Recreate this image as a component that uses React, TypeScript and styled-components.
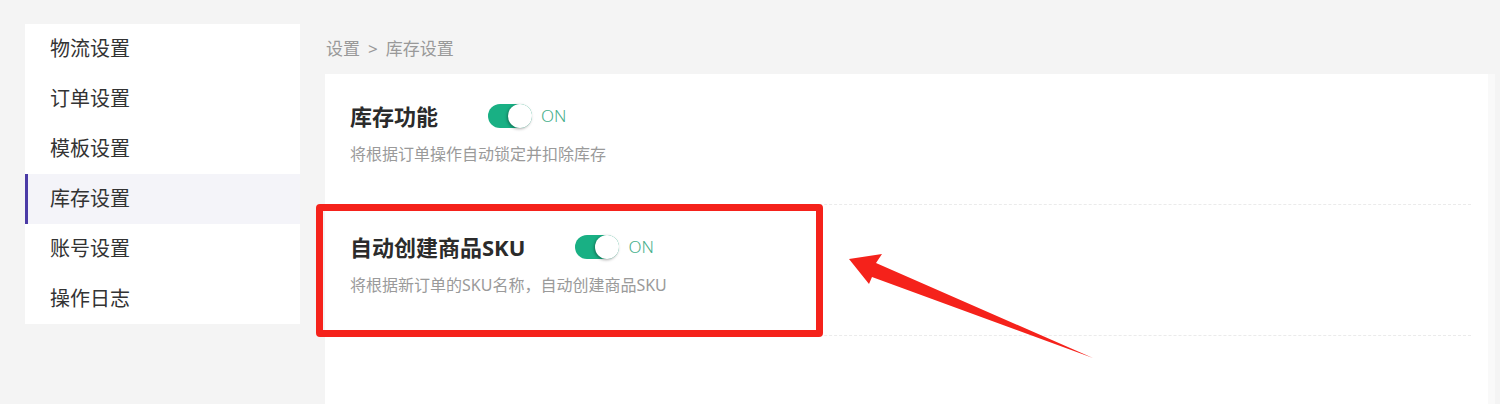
import React from 'react';
import styled, { createGlobalStyle } from 'styled-components';

const GlobalStyle = createGlobalStyle`
  html, body {
    margin: 0;
    padding: 0;
    background: #f4f4f4;
    font-family: "Noto Sans", "Noto Sans CJK SC", sans-serif;
  }
`;

const menuItems = ['物流设置', '订单设置', '模板设置', '库存设置', '账号设置', '操作日志'];

const settings = [
  { title: '库存功能', desc: '将根据订单操作自动锁定并扣除库存', on: true },
  { title: '自动创建商品SKU', desc: '将根据新订单的SKU名称，自动创建商品SKU', on: true },
];

const App = () => {
  return (
    <Page>
      <GlobalStyle />
      <Sidebar>
        {menuItems.map((item) => (
          <MenuItem key={item} active={item === '库存设置'}>
            {item}
          </MenuItem>
        ))}
      </Sidebar>
      <Main>
        <Breadcrumb>
          设置<Sep>&gt;</Sep>库存设置
        </Breadcrumb>
        <Panel>
          {settings.map((s) => (
            <Section key={s.title}>
              <TitleRow>
                <Title>{s.title}</Title>
                <Switch on={s.on}>
                  <Knob />
                </Switch>
                <SwitchLabel>{s.on ? 'ON' : 'OFF'}</SwitchLabel>
              </TitleRow>
              <Desc>{s.desc}</Desc>
            </Section>
          ))}
        </Panel>
      </Main>

      {/* annotation overlay */}
      <Highlight />
      <Arrow width="1500" height="404" viewBox="0 0 1500 404">
        <polygon
          points="849,259 882,254 876,263 1093,358 872,277 869,284"
          fill="#f5221b"
        />
      </Arrow>
    </Page>
  );
};

export default App;

const Page = styled.div`
  position: relative;
  display: flex;
  align-items: flex-start;
  gap: 25px;
  width: 1500px;
  height: 404px;
  box-sizing: border-box;
  padding: 24px 5px 0 25px;
  overflow: hidden;
`;

const Sidebar = styled.nav`
  width: 275px;
  flex-shrink: 0;
  background: #fff;
`;

const MenuItem = styled.div<{ active?: boolean }>`
  height: 50px;
  line-height: 50px;
  box-sizing: border-box;
  padding-left: ${(p) => (p.active ? '22px' : '25px')};
  border-left: ${(p) => (p.active ? '3px solid #4b3ba6' : 'none')};
  background: ${(p) => (p.active ? '#f4f4f9' : '#fff')};
  font-size: 20px;
  color: #333;
  cursor: pointer;
`;

const Main = styled.main`
  flex: 1;
  display: flex;
  flex-direction: column;
  height: 380px;
`;

const Breadcrumb = styled.div`
  height: 50px;
  line-height: 50px;
  padding-left: 1px;
  font-size: 17px;
  color: #999;
`;

const Sep = styled.span`
  margin: 0 8px;
`;

const Panel = styled.section`
  flex: 1;
  background: #fff;
  padding: 0 17px 0 25px;
  border-right: 7px solid #f9f9f9;
`;

const Section = styled.div`
  padding: 27px 0 40px;
  border-bottom: 1px dashed #ebebeb;
`;

const TitleRow = styled.div`
  display: flex;
  align-items: center;
  height: 30px;
`;

const Title = styled.h3`
  margin: 0 50px 0 0;
  font-size: 22px;
  font-weight: 700;
  line-height: 30px;
  color: #2b2b2b;
`;

const Switch = styled.span<{ on?: boolean }>`
  position: relative;
  width: 44px;
  height: 24px;
  border-radius: 12px;
  background: ${(p) => (p.on ? '#19b084' : '#ccc')};
`;

const Knob = styled.span`
  position: absolute;
  top: 0;
  right: 0;
  width: 24px;
  height: 24px;
  border-radius: 50%;
  background: #fff;
  box-shadow: -1px 1px 3px rgba(0, 0, 0, 0.35);
`;

const SwitchLabel = styled.span`
  margin-left: 9px;
  font-size: 17px;
  font-weight: 300;
  line-height: 30px;
  color: #45ae8a;
`;

const Desc = styled.p`
  margin: 13px 0 0;
  font-size: 16px;
  line-height: 20px;
  color: #9a9a9a;
`;

const Highlight = styled.div`
  position: absolute;
  left: 316px;
  top: 204px;
  width: 507px;
  height: 133px;
  box-sizing: border-box;
  border: 7px solid #f5221b;
  border-radius: 4px;
  pointer-events: none;
`;

const Arrow = styled.svg`
  position: absolute;
  left: 0;
  top: 0;
  pointer-events: none;
`;
